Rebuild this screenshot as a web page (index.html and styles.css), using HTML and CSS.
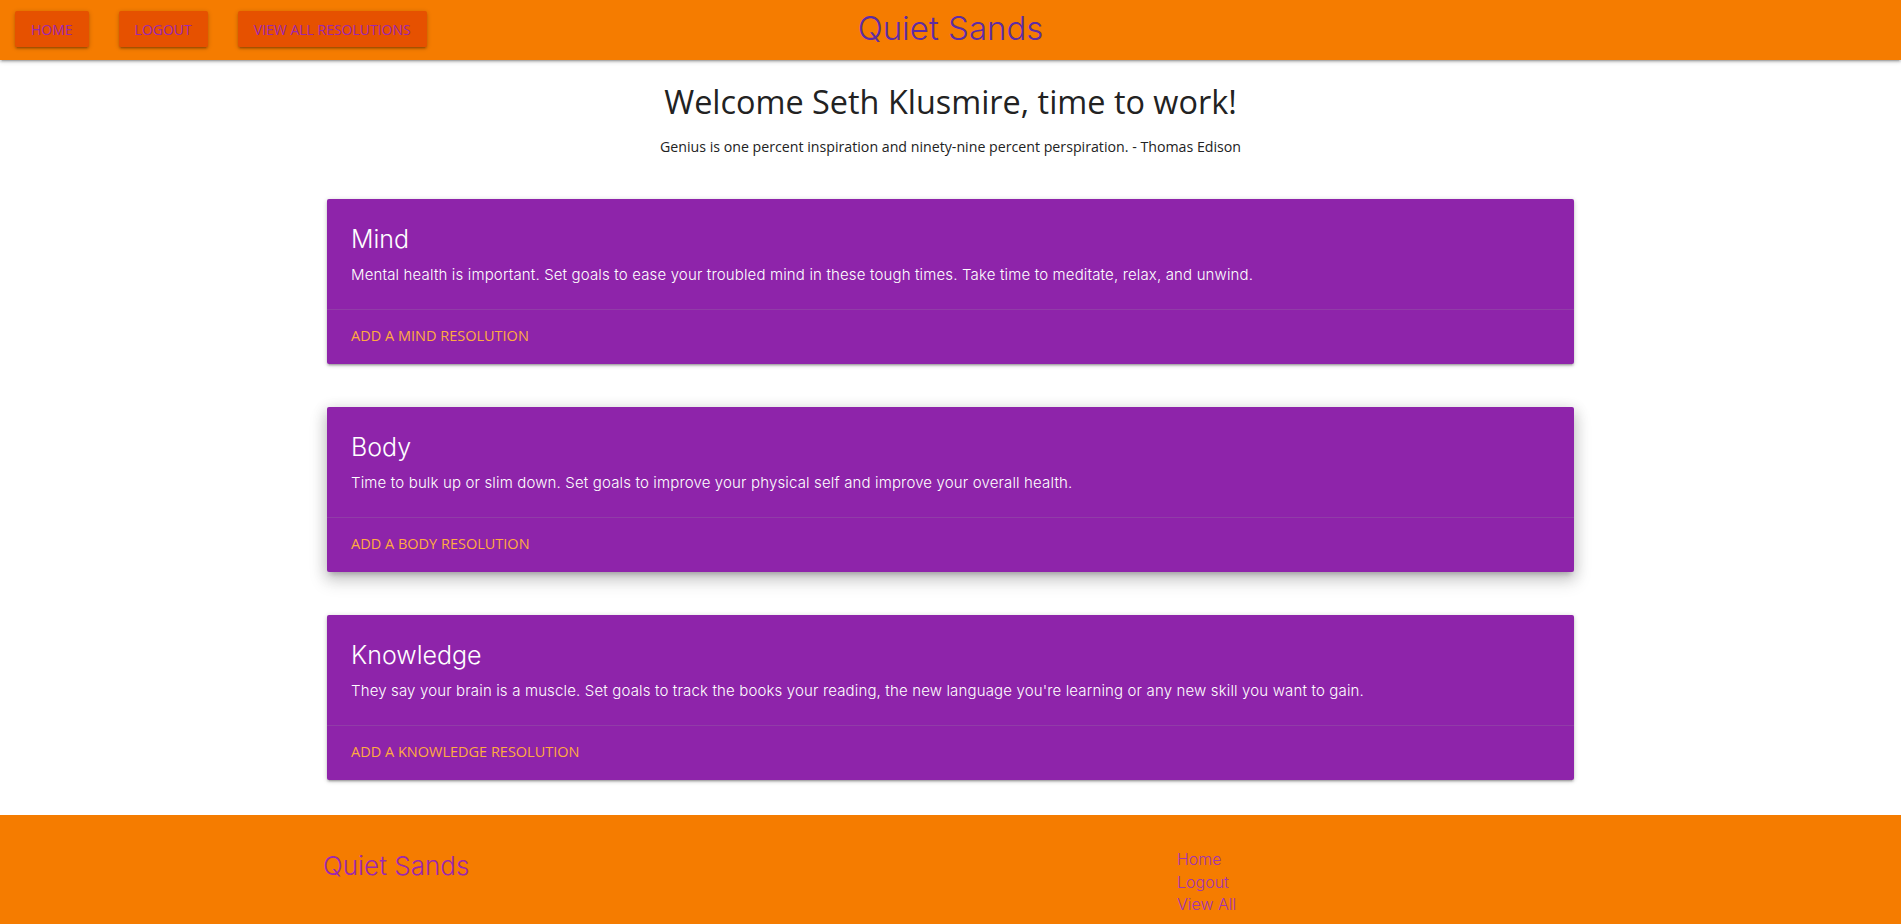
FILE: index.html
```html
<!DOCTYPE html>
<html lang="en">
<head>
<meta charset="utf-8">
<title>Quiet Sands</title>
<link rel="stylesheet" href="styles.css">
</head>
<body>
<header class="nav">
  <div class="nav-buttons">
    <a class="btn" href="#">Home</a>
    <a class="btn" href="#">Logout</a>
    <a class="btn" href="#">View All Resolutions</a>
  </div>
  <div class="brand">Quiet Sands</div>
  <div class="nav-spacer"></div>
</header>

<main class="main">
  <h1 class="welcome">Welcome Seth Klusmire, time to work!</h1>
  <p class="quote">Genius is one percent inspiration and ninety-nine percent perspiration. - Thomas Edison</p>

  <section class="cards">
    <div class="card">
      <div class="card-content">
        <h2 class="card-title">Mind</h2>
        <p class="card-text">Mental health is important. Set goals to ease your troubled mind in these tough times. Take time to meditate, relax, and unwind.</p>
      </div>
      <div class="card-action"><a href="#">Add a Mind Resolution</a></div>
    </div>
    <div class="card card-raised">
      <div class="card-content">
        <h2 class="card-title">Body</h2>
        <p class="card-text">Time to bulk up or slim down. Set goals to improve your physical self and improve your overall health.</p>
      </div>
      <div class="card-action"><a href="#">Add a Body Resolution</a></div>
    </div>
    <div class="card">
      <div class="card-content">
        <h2 class="card-title">Knowledge</h2>
        <p class="card-text">They say your brain is a muscle. Set goals to track the books your reading, the new language you're learning or any new skill you want to gain.</p>
      </div>
      <div class="card-action"><a href="#">Add a Knowledge Resolution</a></div>
    </div>
  </section>
</main>

<footer class="footer">
  <div class="footer-inner">
    <div class="footer-brand">Quiet Sands</div>
    <ul class="footer-links">
      <li><a href="#">Home</a></li>
      <li><a href="#">Logout</a></li>
      <li><a href="#">View All</a></li>
    </ul>
  </div>
</footer>
</body>
</html>
```

FILE: styles.css
```css
* { box-sizing: border-box; }

html, body {
  margin: 0;
  padding: 0;
}

body {
  font-family: "Open Sans", "Liberation Sans", sans-serif;
  color: rgba(0, 0, 0, 0.87);
  background: #ffffff;
}

a { text-decoration: none; }

.nav {
  position: relative;
  z-index: 2;
  height: 60px;
  background: #f57c00;
  display: grid;
  grid-template-columns: 1fr auto 1fr;
  align-items: center;
  box-shadow: 0 2px 2px 0 rgba(0,0,0,0.14), 0 3px 1px -2px rgba(0,0,0,0.12), 0 1px 5px 0 rgba(0,0,0,0.2);
}

.nav-buttons {
  display: flex;
  gap: 30px;
  padding-left: 15px;
  padding-bottom: 2px;
}

.btn {
  display: inline-flex;
  align-items: center;
  height: 36px;
  padding: 0 16px;
  background: #e65100;
  color: #9c27b0;
  font-size: 14px;
  text-transform: uppercase;
  letter-spacing: 0;
  border-radius: 2px;
  box-shadow: 0 2px 2px 0 rgba(0,0,0,0.14), 0 3px 1px -2px rgba(0,0,0,0.12), 0 1px 5px 0 rgba(0,0,0,0.2);
}

.brand {
  font-family: "Inter", "Liberation Sans", sans-serif;
  font-weight: 300;
  font-size: 33px;
  color: #5e2ca5;
  padding-bottom: 4px;
}

.main {
  padding-top: 12px;
}

.welcome {
  margin: 0;
  text-align: center;
  font-weight: 400;
  font-size: 32.4px;
  line-height: 58px;
  color: #222;
}

.quote {
  margin: 6px 0 0;
  text-align: center;
  font-size: 14.2px;
  line-height: 22px;
  color: #222;
}

.cards {
  width: 1247px;
  margin: 41px auto 0;
  display: flex;
  flex-direction: column;
  gap: 43px;
  padding-bottom: 35px;
}

.card {
  background: #8e24aa;
  border-radius: 2px;
  box-shadow: 0 2px 2px 0 rgba(0,0,0,0.14), 0 3px 1px -2px rgba(0,0,0,0.12), 0 1px 5px 0 rgba(0,0,0,0.2);
}

.card-raised {
  box-shadow: 0 8px 17px 2px rgba(0,0,0,0.14), 0 3px 14px 2px rgba(0,0,0,0.12), 0 5px 5px -3px rgba(0,0,0,0.2);
}

.card-content {
  padding: 24px 24px 23px;
  color: #ffffff;
  border-bottom: 1px solid rgba(160,160,160,0.2);
}

.card-title {
  margin: 0;
  font-family: "Inter", "Liberation Sans", sans-serif;
  font-weight: 300;
  font-size: 25px;
  line-height: 32px;
}

.card-text {
  margin: 9px 0 0;
  font-family: "Inter", "Liberation Sans", sans-serif;
  font-weight: 300;
  font-size: 15px;
  letter-spacing: 0.15px;
  line-height: 22px;
}

.card-action {
  padding: 14px 24px 17px;
}

.card-action a {
  color: #ffab40;
  font-size: 14.5px;
  text-transform: uppercase;
  line-height: 22px;
}

.footer {
  background: #f57c00;
  padding-top: 31px;
  padding-bottom: 40px;
}

.footer-inner {
  width: 1247px;
  margin: 0 auto;
  display: grid;
  grid-template-columns: 850px 1fr;
}

.footer-brand {
  font-family: "Inter", "Liberation Sans", sans-serif;
  font-weight: 300;
  font-size: 26px;
  color: #9c27b0;
  margin-left: -4px;
  padding-top: 4px;
}

.footer-links {
  list-style: none;
  margin: 0;
  padding: 2px 0 0;
}

.footer-links li {
  line-height: 22.5px;
}

.footer-links a {
  font-family: "Inter", "Liberation Sans", sans-serif;
  font-weight: 300;
  font-size: 16px;
  color: #a233b5;
}
```
